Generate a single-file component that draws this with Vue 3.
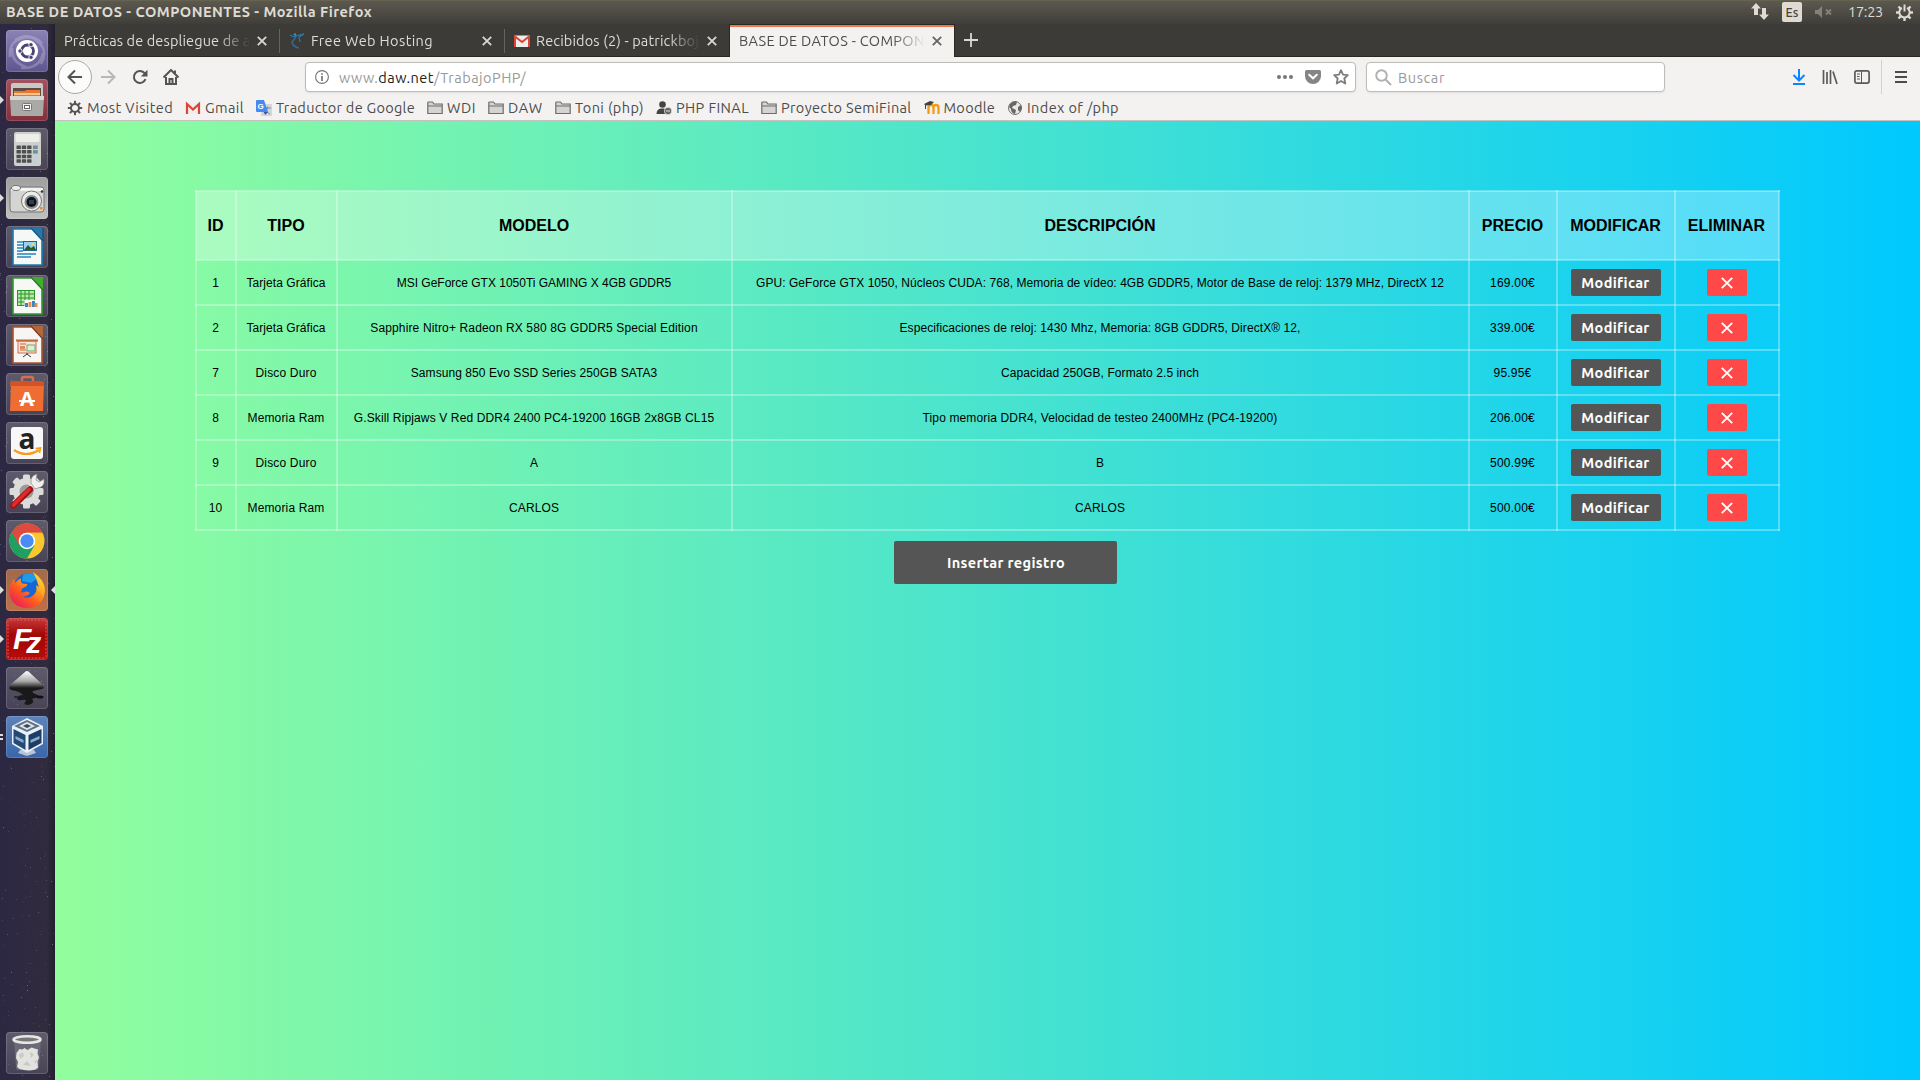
<script setup>
// Spreads an element's letters so the label takes the given width.
const applyFit = (el, { value }) => {
  if (!value) return
  el.style.letterSpacing = '0px'
  const range = document.createRange()
  range.selectNodeContents(el)
  const natural = range.getBoundingClientRect().width
  el.style.letterSpacing = `${(value - natural) / el.textContent.length}px`
}
const vFit = { mounted: applyFit }

const bookmarks = [
  { icon: 'gear', label: 'Most Visited', width: 86 },
  { icon: 'gmail', label: 'Gmail', width: 39 },
  { icon: 'translate', label: 'Traductor de Google', width: 139 },
  { icon: 'folder', label: 'WDI', width: 29 },
  { icon: 'folder', label: 'DAW', width: 35 },
  { icon: 'folder', label: 'Toni (php)', width: 69 },
  { icon: 'user', label: 'PHP FINAL', width: 73 },
  { icon: 'folder', label: 'Proyecto SemiFinal', width: 130.5 },
  { icon: 'moodle', label: 'Moodle', width: 51.5 },
  { icon: 'globe', label: 'Index of /php', width: 92 }
]

const headers = ['ID', 'TIPO', 'MODELO', 'DESCRIPCIÓN', 'PRECIO', 'MODIFICAR', 'ELIMINAR']
const rows = [
  ['1', 'Tarjeta Gráfica', 'MSI GeForce GTX 1050Ti GAMING X 4GB GDDR5', 'GPU: GeForce GTX 1050, Núcleos CUDA: 768, Memoria de vídeo: 4GB GDDR5, Motor de Base de reloj: 1379 MHz, DirectX 12', '169.00€'],
  ['2', 'Tarjeta Gráfica', 'Sapphire Nitro+ Radeon RX 580 8G GDDR5 Special Edition', 'Especificaciones de reloj: 1430 Mhz, Memoria: 8GB GDDR5, DirectX® 12,', '339.00€'],
  ['7', 'Disco Duro', 'Samsung 850 Evo SSD Series 250GB SATA3', 'Capacidad 250GB, Formato 2.5 inch', '95.95€'],
  ['8', 'Memoria Ram', 'G.Skill Ripjaws V Red DDR4 2400 PC4-19200 16GB 2x8GB CL15', 'Tipo memoria DDR4, Velocidad de testeo 2400MHz (PC4-19200)', '206.00€'],
  ['9', 'Disco Duro', 'A', 'B', '500.99€'],
  ['10', 'Memoria Ram', 'CARLOS', 'CARLOS', '500.00€']
]
const cellWidths = [
  [0, 79, 274.5, 688, 45],
  [0, 79, 327.5, 401, 45],
  [0, 61, 246.5, 198, 38],
  [0, 77, 360.5, 355, 45],
  [0, 61, 0, 0, 45],
  [0, 77, 50, 50, 45]
]

// Star specks of the launcher wallpaper.
let seed = 17
const rnd = () => (seed = (seed * 16807) % 2147483647) / 2147483647
const specks = Array.from({ length: 420 }, () => ({
  x: Math.floor(rnd() * 55), y: Math.floor(rnd() * 1056), o: (0.06 + rnd() * rnd() * 0.4).toFixed(2)
}))
const calcKeys = [0, 1, 2, 3].flatMap(r => [0, 1, 2].map(c => ({ x: 10.5 + c * 5.3, y: 17.5 + r * 4.6 })))
const teeth = [0, 45, 90, 135, 180, 225, 270, 315]
</script>

<template>
  <div class="desktop">
    <header class="panel">
      <b v-fit="366" class="panel-title">BASE DE DATOS - COMPONENTES - Mozilla Firefox</b>
      <div class="indicators">
        <svg class="i-net" width="18" height="18" viewBox="0 0 18 18"><path d="M5 0L10 5.5H7V12H3V5.5H0zM13 17l5-5.500h-3V5h-4v6.500H8z" fill="#dfdbd2" /></svg>
        <span class="kbd">Es</span>
        <svg class="i-vol" width="18" height="14" viewBox="0 0 18 14"><path d="M0 5h3l4-4v12L3 9H0z" fill="#85827a" /><path d="M11 4.500l5 5m0-5l-5 5" stroke="#85827a" stroke-width="1.800" /></svg>
        <span v-fit="35" class="clock">17:23</span>
        <svg class="i-power" width="17" height="17" viewBox="0 0 17 17">
          <g fill="#dfdbd2"><rect v-for="t in teeth" :key="t" v-show="t" x="7.300" y="0" width="2.400" height="4" :transform="`rotate(${t} 8.5 8.500)`" /></g>
          <path d="M5.800 3.900a5.200 5.200 0 1 0 5.400 0" fill="none" stroke="#dfdbd2" stroke-width="2" /><path d="M8.500.5v7" stroke="#dfdbd2" stroke-width="2" />
        </svg>
      </div>
    </header>

    <div class="workspace">
      <aside class="launcher">
        <svg class="stars" width="55" height="1056"><rect v-for="(s, i) in specks" :key="i" :x="s.x" :y="s.y" width="1" height="1" fill="#cfc9ee" :opacity="s.o" /></svg>

        <div class="tile t-dash"><svg viewBox="0 0 42 42">
          <g fill="none" stroke="#fff" opacity=".22" stroke-width="2.500"><path d="M4 27Q2 9 22 7Q32 7 36 14" /><path d="M9 10Q26 0 37 18Q40 25 35 34" /><path d="M15 38Q34 39 37 23" /><path d="M6 18Q5 32 20 37" /></g>
          <circle cx="21" cy="21" r="11" fill="#fff" /><circle cx="21.500" cy="21" r="6" fill="none" stroke="#4a4272" stroke-width="2.800" />
          <g fill="#4a4272" stroke="#fff" stroke-width=".9"><circle cx="14" cy="21" r="2.200" /><circle cx="25" cy="14.700" r="2.200" /><circle cx="25" cy="27.300" r="2.200" /></g>
        </svg></div>

        <div class="tile t-files"><svg viewBox="0 0 42 42">
          <rect x="5" y="4" width="32" height="17" rx="2" fill="#c9c8c4" /><rect x="7" y="9" width="28" height="10" fill="#5d4b44" /><path d="M8 12h11l1-1h14v8H8z" fill="#e57732" /><path d="M8 14h26v2H8z" fill="#ffc38a" />
          <path d="M4 17h34l-1 19q0 1-1 1H6q-1 0-1-1z" fill="#aaa9a5" /><path d="M4 17h34v4H4z" fill="#d8d7d3" /><rect x="16.500" y="24.500" width="9" height="7" rx="1" fill="#eee" stroke="#777" /><rect x="18.500" y="26.500" width="5" height="3" fill="#fff" stroke="#666" />
        </svg><i class="pip" /></div>

        <div class="tile"><svg viewBox="0 0 42 42">
          <rect x="8" y="4" width="27" height="34" rx="2" fill="#cfcfcc" /><rect x="9.500" y="6" width="24" height="8" rx="1" fill="#eceeea" />
          <g fill="#4b4f50"><rect v-for="(k, i) in calcKeys" :key="i" :x="k.x" :y="k.y" width="4.400" height="3.500" rx=".5" /></g><rect x="27" y="17.500" width="4.800" height="3.500" fill="#728f9c" /><rect x="27" y="22.100" width="4.800" height="3.500" fill="#728f9c" /><rect x="27" y="26.700" width="4.800" height="8.200" fill="#bdd0dc" />
        </svg></div>

        <div class="tile t-camera"><svg viewBox="0 0 42 42">
          <rect x="4" y="10" width="34" height="25" rx="3" fill="#d4d4d2" stroke="#777" /><rect x="5" y="11" width="32" height="3" fill="#f3f3f2" /><ellipse cx="10" cy="11" rx="4.500" ry="2.500" fill="#eee" stroke="#777" />
          <circle cx="25.500" cy="24" r="10" fill="#ececec" stroke="#777" /><circle cx="25.500" cy="25" r="7" fill="#8a8a88" /><circle cx="25.500" cy="25" r="5" fill="#111" /><rect x="23" y="23" width="5" height="4" fill="#1e3f72" /><circle cx="36" cy="14.500" r="1.300" fill="#333" /><rect x="34" y="30" width="2.500" height="2.500" fill="#f08a1d" />
        </svg><i class="pip" /></div>

        <div class="tile"><svg viewBox="0 0 42 42">
          <path d="M7 3h19l10 11v25H7z" fill="#f6f8f8" stroke="#1c7ab1" stroke-width="1.600" /><path d="M25 2h12v13z" fill="#2b75a7" /><path d="M25 2l12 13V2" fill="none" stroke="#14476a" />
          <g stroke="#2784ba" stroke-width="1.500"><path d="M11 16h6M11 19h6M11 22h6M11 25h6M11 28h19M11 31h14" /></g><rect x="17.500" y="15.500" width="13" height="9" fill="#9ad0ee" stroke="#25648b" /><path d="M18 24l4-5 3 3 3-2 2 4z" fill="#305a27" /><circle cx="27" cy="18" r="1.200" fill="#ffd64d" />
        </svg></div>

        <div class="tile"><svg viewBox="0 0 42 42">
          <path d="M7 3h19l10 11v25H7z" fill="#f6f8f5" stroke="#2d9c28" stroke-width="1.600" /><path d="M25 2h12v13z" fill="#3fae2f" /><path d="M25 2l12 13" stroke="#235e1d" />
          <rect x="11.500" y="15.500" width="17" height="15" fill="#b8e8a8" stroke="#29952a" /><path d="M12 19h16M12 23h16M12 27h16M15 16v14M19 16v14M23 16v14" stroke="#29952a" /><rect x="18.500" y="25" width="12.500" height="7" fill="#fff" /><path d="M20.500 32v-4M27.500 32v-6" stroke="#3187c9" stroke-width="3" /><path d="M24 32v-5M30 32v-4" stroke="#ea8952" stroke-width="3" />
        </svg></div>

        <div class="tile"><svg viewBox="0 0 42 42">
          <path d="M7 3h19l10 11v25H7z" fill="#f8f6f4" stroke="#a9532d" stroke-width="1.600" /><path d="M25 2h12v13z" fill="#b5653a" /><path d="M25 2l12 13" stroke="#583221" />
          <rect x="12" y="17" width="18" height="12" fill="#fae3d5" stroke="#cb7148" /><path d="M10 16.500h22" stroke="#c3683f" stroke-width="2" /><path d="M14 20h6M14 26h6" stroke="#c3683f" /><rect x="14" y="22" width="5" height="3" fill="#db8a64" /><rect x="21" y="21" width="8" height="6" fill="#ddefd6" stroke="#78a86d" /><path d="M21 29v1l-4 3m4-3l4 3" stroke="#333" fill="none" />
        </svg></div>

        <div class="tile"><svg viewBox="0 0 42 42">
          <path d="M16 12V6q0-2 2-2h7q2 0 2 2v6" fill="none" stroke="#d86e50" stroke-width="2.500" /><path d="M5 9h33l-1 29H4z" fill="#ef6c33" /><path d="M4 13h34V9l-3-1H7L4 9z" fill="#d35328" />
          <text x="21" y="32.500" text-anchor="middle" class="g-bag">A</text><path d="M13 28h16" stroke="#fff" stroke-width="2" />
        </svg></div>

        <div class="tile"><svg viewBox="0 0 42 42">
          <rect x="5" y="5" width="32" height="32" rx="3" fill="#f7f7f7" /><text x="21" y="26.500" text-anchor="middle" class="g-amz">a</text><path d="M8 28q12 8 25 0" fill="none" stroke="#f79b20" stroke-width="2.200" /><path d="M29.500 26.500l5-.5-1 5" fill="none" stroke="#f79b20" stroke-width="1.600" />
        </svg></div>

        <div class="tile"><svg viewBox="0 0 42 42">
          <g fill="#dcdcda"><rect v-for="t in teeth" :key="t" x="17" y="3.500" width="7" height="10" rx="1.500" :transform="`rotate(${t} 20.500 20.500)`" /><circle cx="20.500" cy="20.500" r="13.500" /></g><circle cx="20.500" cy="20.500" r="7" fill="#9b9b9e" />
          <path d="M15 27L29 12" stroke="#e9e9e8" stroke-width="5" /><path d="M25 12q-1-7 6-9l-1 6 3 2 5-3q1 8-6 9l-3 1z" fill="#efefee" stroke="#888" stroke-width=".7" /><path d="M7.500 34.500L24 18.500" stroke="#9d1515" stroke-width="6.500" stroke-linecap="round" /><path d="M7.500 34L23 18.500" stroke="#e12b2b" stroke-width="3.500" stroke-linecap="round" />
        </svg></div>

        <div class="tile"><svg viewBox="0 0 42 42">
          <circle cx="21" cy="21" r="17.500" fill="#fbc72f" /><path d="M21 21L5.840 12.250A17.500 17.500 0 0 1 36.160 12.250H21z" fill="#dd4b3e" /><path d="M21 21H21L5.840 12.250A17.500 17.500 0 0 0 21 38.500L28.500 25.500z" fill="#1ea061" /><path d="M21 12.500H36.300A17.500 17.500 0 0 0 5.840 12.250L13.500 25.500z" fill="#dd4b3e" />
          <circle cx="21" cy="21" r="8.300" fill="#fff" /><circle cx="21" cy="21" r="6.700" fill="#4b8cf4" />
        </svg></div>

        <div class="tile t-firefox"><svg viewBox="0 0 42 42">
          <defs><linearGradient id="fx" x1="1" y1="0" x2=".2" y2="1"><stop offset="0" stop-color="#fff04a" /><stop offset=".35" stop-color="#ffb01f" /><stop offset=".65" stop-color="#ff5a1f" /><stop offset="1" stop-color="#e81b5d" /></linearGradient></defs>
          <circle cx="22" cy="18.500" r="14" fill="#1766d6" /><path d="M17 6q9-4 15 3l-7 5-9-2z" fill="#1f9bea" />
          <path d="M27 3q12 8 12 19Q37 39 21 39Q4 38 3.500 22Q4 14 8 10l1 4q3-4 6-4.500-1 3 1 5l5 .5q1 2-5 4.500l-1 4q3 0 5-1 3 0 4 2-3 3-7 3 5 3 10-1 5-4 3-10 2 0 3 2Q31 10 27 3z" fill="url(#fx)" />
        </svg><i class="pip" /><i class="pip-r" /></div>

        <div class="tile t-fz"><svg viewBox="0 0 42 42"><rect x="2" y="2" width="38" height="38" rx="2" fill="none" stroke="#e15a5a" stroke-dasharray="2 1.500" />
          <text x="7" y="31" class="g-fz">F<tspan dx="-5" dy="3.500">z</tspan></text></svg><i class="pip" /></div>

        <div class="tile"><svg viewBox="0 0 42 42">
          <defs><linearGradient id="ink" x2="0" y2="1"><stop offset="0" stop-color="#fff" /><stop offset=".3" stop-color="#a9a9a9" /><stop offset=".5" stop-color="#191919" /></linearGradient></defs>
          <path d="M19 5q2-2 4 0l14 13q2 3-1 4l-9 2q-2 2 5 4 2 2-3 3l-3 1q4 4-4 6-5 0-3-3 3-3-3-2-5 1-5-2 1-3 6-3-4-4-12-5-3-2-1-5z" fill="url(#ink)" /><ellipse cx="34" cy="30" rx="3.500" ry="1.500" fill="#111" /><ellipse cx="10" cy="30" rx="2" ry="1" fill="#222" />
        </svg></div>

        <div class="tile t-vbox"><svg viewBox="0 0 42 42">
          <path d="M14 34h14l2 3-9 3-9-3z" fill="#b7c4d5" /><path d="M21 2l16 8v18l-16 9-15-9V10z" fill="#e9f0f7" /><path d="M21 4l13 6-13 6-13-6z" fill="#64717f" /><path d="M21 6l8 4-8 4-8-4z" fill="#dce5ee" /><path d="M21 8l4 2-4 2-4-2z" fill="#35495f" />
          <path d="M7.500 13l12 6v15l-12-7z" fill="#234a75" /><path d="M35.500 13l-13 6v15l13-7z" fill="#1c3d68" /><path d="M9.500 20l8 4v3l-8-4zM24.500 24l9-4v3l-9 4z" fill="#8eacc9" />
        </svg><i class="bars" /></div>

        <div class="tile t-trash"><svg viewBox="0 0 42 42">
          <path d="M8 8l2 28q0 2 3 2h17q3 0 3-2l2-28z" fill="#777783" opacity=".65" /><path d="M10.500 21l3-4 3 .5 2-1.500 3 2 4-2.500 3 1 3.500 1-.5 4 1.500 4-1.500 4 .5 6-2.500 2q-8 2-16-.5l-2.500-2 1-5-2-4z" fill="#e2e2df" /><path d="M13 22l4-1.500 1 3.500-4 3zM24 20l4 2.500-3 3.500zM17 33l4-4 4 5zM28 29l3-1-1 4z" fill="#c9c9c6" /><ellipse cx="21" cy="7.500" rx="13.500" ry="3.200" fill="#777" stroke="#e6e6e2" stroke-width="2.500" />
        </svg></div>
      </aside>

      <main class="browser">
        <nav class="tabs">
          <div class="tab first"><span class="clip"><span v-fit="195">Prácticas de despliegue de ap</span></span><svg class="close" viewBox="0 0 10 10"><path d="M.8.8l8.400 8.400M9.200.8L.8 9.200" /></svg></div>
          <div class="tab"><svg class="fav" viewBox="0 0 16 16"><path d="M1 2q5 3 6 1l8-2-5 3 1 5" fill="none" stroke="#287bb1" stroke-width="1.200" /><circle cx="6" cy="1.500" r="1.300" fill="#438ebf" /><path d="M7 4l-4 5q1 5 7 6" stroke="#326b91" fill="none" stroke-width="1.500" /></svg><span class="clip"><span v-fit="122">Free Web Hosting</span></span><svg class="close" viewBox="0 0 10 10"><path d="M.8.8l8.400 8.400M9.200.8L.8 9.200" /></svg></div>
          <div class="tab"><svg class="fav" viewBox="0 0 16 16"><path d="M1 2.500h14v11.500H1z" fill="#eee" /><path d="M1 14V3.500L8 9l7-5.500V14" fill="none" stroke="#db4437" stroke-width="2" /></svg><span class="clip"><span v-fit="171">Recibidos (2) - patrickboje</span></span><svg class="close" viewBox="0 0 10 10"><path d="M.8.8l8.400 8.400M9.200.8L.8 9.200" /></svg></div>
          <div class="tab active"><span class="clip"><span v-fit="194">BASE DE DATOS - COMPONE</span></span><svg class="close" viewBox="0 0 10 10"><path d="M.8.8l8.400 8.400M9.200.8L.8 9.200" /></svg></div>
          <svg class="plus" width="14" height="14" viewBox="0 0 14 14"><path d="M7 0v14M0 7h14" stroke="#dad8d4" stroke-width="1.800" /></svg>
        </nav>

        <div class="toolbar">
          <div class="back"><svg width="16" height="16" viewBox="0 0 16 16"><path d="M15 8H2M8 1.500L1.500 8 8 14.500" /></svg></div>
          <svg class="tool dim fwd" viewBox="0 0 16 16"><path d="M1 8h13M8 1.500L14.500 8 8 14.500" /></svg>
          <svg class="tool reload" viewBox="0 0 16 16"><path d="M13.500 10.200A6 6 0 1 1 12.200 3.800L14 5.500" /><path d="M15.500.8v6.700H8.800z" class="solid" /></svg>
          <svg class="tool home" viewBox="0 0 16 16"><path d="M.5 8.500L8 1l7.500 7.500M3 8v7h10V8" /><path d="M12 1.500v3" /><path d="M6.500 15v-5h3v5" /></svg>
          <div class="url">
            <svg class="info" width="14" height="14" viewBox="0 0 14 14"><circle cx="7" cy="7" r="6.400" fill="none" stroke="#737373" stroke-width="1.100" /><path d="M7 3.200v1.600M7 6v5" stroke="#737373" stroke-width="1.700" /></svg>
            <span v-fit="187" class="address">www.<b>daw.net</b>/TrabajoPHP/</span>
            <svg class="dots" width="16" height="4" viewBox="0 0 16 4"><circle cx="2" cy="2" r="2" /><circle cx="8" cy="2" r="2" /><circle cx="14" cy="2" r="2" /></svg>
            <svg class="pocket" width="16" height="14" viewBox="0 0 16 14"><path d="M1.500 0h13Q16 0 16 1.500V6a8 8 0 0 1-16 0V1.500Q0 0 1.500 0z" fill="#858585" /><path d="M4.200 4.800L8 8.300l3.800-3.500" fill="none" stroke="#fff" stroke-width="2" stroke-linecap="round" /></svg>
            <svg class="star" width="16" height="16" viewBox="0 0 16 16"><path d="M8 1.200l2 4.500 4.800.5-3.500 3.300 1 5L8 12l-4.300 2.500 1-5L1.200 6.200 6 5.700z" fill="none" stroke="#7c7c7c" stroke-width="1.800" stroke-linejoin="round" /></svg>
          </div>
          <div class="search"><svg width="17" height="17" viewBox="0 0 17 17"><circle cx="6.500" cy="6.500" r="5.300" fill="none" stroke="#b0b0b0" stroke-width="1.900" /><path d="M10.500 10.500l5.500 5.500" stroke="#b0b0b0" stroke-width="2" /></svg><span v-fit="47">Buscar</span></div>
          <div class="actions">
            <svg width="14" height="16" viewBox="0 0 14 16"><path d="M7 0v11M1.500 6L7 11.500 12.500 6M1 15h12" fill="none" stroke="#0a84ff" stroke-width="2" /></svg>
            <svg width="16" height="16" viewBox="0 0 16 16"><path d="M1.500 1v14M5 3v12M8.500 1v14M11 2.500l4 12.500" fill="none" stroke="#5b5b5b" stroke-width="1.700" /></svg>
            <svg width="16" height="14" viewBox="0 0 16 14"><rect x=".9" y=".9" width="14.200" height="12.200" rx="2" fill="none" stroke="#5b5b5b" stroke-width="1.700" /><path d="M7.500 1v12M3 4h3M3 6.500h2.500M3 9h3" stroke="#5b5b5b" stroke-width="1" /></svg>
          </div>
          <svg class="menu" width="12" height="12" viewBox="0 0 12 12"><path d="M0 1h12M0 6h12M0 11h12" stroke="#4c4c4c" stroke-width="1.800" /></svg>
        </div>

        <div class="bookmarks">
          <div v-for="(b, i) in bookmarks" :key="i" class="bm">
            <svg width="16" height="16" viewBox="0 0 16 16">
              <template v-if="b.icon === 'gear'"><g fill="#555"><rect v-for="t in teeth" :key="t" x="7" y=".8" width="2" height="4" :transform="`rotate(${t} 8 8)`" /></g><circle cx="8" cy="8" r="4" fill="none" stroke="#555" stroke-width="2" /></template>
              <template v-else-if="b.icon === 'gmail'"><path d="M1 3h14v11H1z" fill="#f1eded" /><path d="M2 14V4l6 5.500L14 4v10" fill="none" stroke="#d94536" stroke-width="2.200" /></template>
              <template v-else-if="b.icon === 'translate'"><rect x="5" y="4" width="11" height="12" fill="#d4d6da" /><path d="M8 8h7M11.500 6.500V8q-1 4-4 5M9 9q2 4 5 5" fill="none" stroke="#7c8b9b" /><path d="M0 1q0-1 1-1h7l4 12H1q-1 0-1-1z" fill="#4889ef" /><path d="M8 12h4l-3 3z" fill="#2b50a5" /><text x="1.500" y="9" class="g-tr">G</text></template>
              <path v-else-if="b.icon === 'folder'" d="M.8 13.500v-11Q.8 2 1.500 2h4l1.500 2h8.200v9.500zM1 6h14" fill="#d5d4d2" stroke="#6d6d6d" stroke-width="1.200" />
              <template v-else-if="b.icon === 'user'"><circle cx="6.500" cy="4.500" r="3.300" fill="#444" /><path d="M.5 14q0-5 4.500-5.500h3l2 1v4.500z" fill="#444" /><circle cx="12" cy="11" r="3.700" fill="#666" stroke="#eee" stroke-width=".7" /><path d="M10 11h4" stroke="#ddd" /></template>
              <template v-else-if="b.icon === 'moodle'"><path d="M4.500 14V7.500Q4.500 5 7 5t2.500 2.500V14M9.500 14V7.500Q9.500 5 12 5t2.500 2.500V14" fill="none" stroke="#f49a18" stroke-width="2.300" /><path d="M0 4l6-3 4 1-3 3-5 .5V9H1V5z" fill="#444" /></template>
              <template v-else><circle cx="8" cy="8" r="6.500" fill="#e8e8e8" stroke="#666" stroke-width=".9" /><path d="M3 4q5-4 7-2L9 5 6 6 5 8l4 2-1 4q-4-1-4-5L2 7zM11 7l3-2 1 3-2 4-2-2z" fill="#666" /></template>
            </svg>
            <span v-fit="b.width">{{ b.label }}</span>
          </div>
        </div>

        <section class="page">
          <table>
            <colgroup><col class="c-id"><col class="c-type"><col class="c-model"><col class="c-desc"><col class="c-price"><col class="c-edit"><col class="c-del"></colgroup>
            <thead><tr><th v-for="h in headers" :key="h">{{ h }}</th></tr></thead>
            <tbody>
              <tr v-for="(r, n) in rows" :key="r[0]">
                <td v-for="(c, i) in r" :key="i"><span v-fit="cellWidths[n][i]">{{ c }}</span></td>
                <td><button class="edit"><span v-fit="68">Modificar</span></button></td>
                <td><button class="del"><svg width="12" height="12" viewBox="0 0 12 12"><path d="M.8.8l10.400 10.400M11.200.8L.8 11.200" /></svg></button></td>
              </tr>
            </tbody>
          </table>
          <button class="insert"><span v-fit="118">Insertar registro</span></button>
        </section>
      </main>
    </div>
  </div>
</template>

<style>
body { margin: 0; overflow: hidden; }
</style>

<style scoped>
.desktop { width: 1920px; height: 1080px; display: flex; flex-direction: column; overflow: hidden; font-family: Ubuntu, "Noto Sans", sans-serif; font-size: 14.500px; }
.desktop * { box-sizing: border-box; }
svg { display: block; flex: none; }
span, b { white-space: nowrap; }
.panel { height: 24px; flex: none; display: flex; justify-content: space-between; align-items: center; background: linear-gradient(#5d5a50, #3f3e39); color: #dfdbd2; box-shadow: inset 0 1px #65624f; padding: 0 7px 0 6px; }
.panel-title { font-size: 14.500px; line-height: 22px; padding-bottom: 1px; }
.indicators { display: flex; align-items: center; }
.i-net { margin-right: 13px; }
.kbd { width: 20px; height: 20px; border-radius: 2px; background: #dfdbd2; color: #45433d; font-size: 12.500px; font-weight: 500; line-height: 20px; text-align: center; margin-right: 13px; }
.i-vol { margin-right: 15px; }
.clock { margin-right: 13px; line-height: 22px; padding-bottom: 1px; }
.workspace { flex: 1; display: flex; min-height: 0; }
.launcher { width: 55px; flex: none; position: relative; background: linear-gradient(90deg, #2c2843, #302b3d 85%, #241f30); padding: 6px 0 6px 6px; display: flex; flex-direction: column; gap: 7px; }
.stars { position: absolute; left: 0; top: 0; }
.tile { width: 42px; height: 42px; flex: none; position: relative; border-radius: 4px; background: linear-gradient(rgba(255,255,255,.23), rgba(255,255,255,.12)); box-shadow: inset 0 0 0 1px rgba(255,255,255,.15); }
.tile svg { width: 42px; height: 42px; }
.t-dash { background: linear-gradient(#8b82b5, #5e5690); }
.t-files { background: linear-gradient(#a35261, #842f3c); }
.t-camera { background: linear-gradient(#9e9e9e, #c0c0bf); }
.t-firefox { background: linear-gradient(#a06a4b, #bd7047); }
.t-fz { background: linear-gradient(#c63a3a, #a30606 40%, #b40c0c); }
.t-vbox { background: linear-gradient(#5d83bb, #3a66aa); }
.t-trash { margin-top: auto; }
.pip, .pip-r { position: absolute; top: 17px; border: 4px solid transparent; }
.pip { left: -6px; border-left-color: #ddd; border-right: 0; }
.pip-r { right: -7px; border-right-color: #ddd; border-left: 0; }
.bars { position: absolute; left: -6px; top: 18px; width: 3px; height: 6px; border: solid #ddd; border-width: 2px 0; }
.g-bag { font: bold 20px "Noto Sans", sans-serif; fill: #fff; }
.g-amz { font: bold 28px "Open Sans", sans-serif; fill: #222; }
.g-fz { font: italic bold 30px "Liberation Sans", sans-serif; fill: #fff; }
.g-tr { font: bold 8px "Liberation Sans", sans-serif; fill: #fff; }
.browser { flex: 1; display: flex; flex-direction: column; min-width: 0; background: #f4f2f1; }
.tabs { height: 33px; flex: none; display: flex; background: #3c3b37; border-bottom: 1px solid #292825; color: #dfdcd8; }
.tab { width: 225px; display: flex; align-items: center; padding: 1px 12px 0 9px; position: relative; }
.tab.first { width: 224px; }
.tab:nth-child(1)::after, .tab:nth-child(2)::after { content: ""; position: absolute; right: -1px; top: 5px; width: 1px; height: 24px; background: #66645f; }
.clip { flex: 1; overflow: hidden; margin-right: 7px; line-height: 22px; -webkit-mask-image: linear-gradient(90deg, #000 calc(100% - 32px), transparent); }
.fav { width: 16px; height: 16px; margin: 0 6px 0 1px; }
.close { width: 10px; height: 10px; fill: none; stroke: #dad8d4; stroke-width: 1.800; }
.tab.active { width: 226px; height: 33px; padding-top: 0; background: #f4f2f1; color: #4c4c4c; border: 1px solid #292825; border-bottom: 0; box-shadow: inset 0 2px #f0774b; }
.active .close { stroke: #66645f; }
.plus { margin: 9px 0 0 9px; }
.toolbar { height: 38px; margin-top: 1px; flex: none; display: flex; align-items: center; padding: 0 13px 0 3px; fill: none; stroke: #545454; stroke-width: 2; }
.toolbar span { stroke: none; }
.back { width: 34px; height: 34px; border: 1px solid #aaa9a7; border-radius: 50%; background: #fbfbfa; display: grid; place-items: center; }
.tool { width: 16px; height: 16px; }
.dim { stroke: #b8b7b5; }
.fwd { margin-left: 8px; }
.reload { margin-left: 16px; }
.reload .solid { fill: #545454; stroke: none; }
.home { margin-left: 15px; }
.url, .search { height: 30px; background: #fff; border: 1px solid #bebcb9; border-radius: 4px; display: flex; align-items: center; box-shadow: 0 1px 2px rgba(0,0,0,.08); }
.url { width: 1051px; margin-left: 126px; padding: 0 6px 0 9px; stroke: none; }
.address { margin-left: 10px; color: #999; line-height: 26px; padding-top: 1px; }
.address b { font-weight: 400; color: #222; }
.dots { margin-left: auto; fill: #777; }
.pocket { margin: 0 12px; }
.search { width: 299px; margin-left: 10px; padding-left: 8px; color: #999; }
.search span { margin-left: 6px; line-height: 26px; padding-top: 1px; }
.actions { display: flex; align-items: center; gap: 16px; margin-left: auto; padding-right: 11px; border-right: 1px solid #d3d1cf; height: 34px; }
.menu { margin-left: 13px; }
.bookmarks { height: 25px; flex: none; display: flex; align-items: center; gap: 12px; padding: 0 0 0 12px; color: #4c4c4c; border-bottom: 1px solid #c5c1be; }
.bm { display: flex; align-items: center; gap: 4px; }
.bm span { line-height: 22px; }
.page { flex: 1; background: linear-gradient(to right, #92fe9d, #00c9ff); padding-top: 69px; }
table { width: 1585px; margin: 0 auto; border-collapse: collapse; table-layout: fixed; font: 12px "Liberation Sans", Arial, sans-serif; color: #000; text-align: center; }
.c-id { width: 40px; } .c-type { width: 101px; } .c-model { width: 395px; } .c-desc { width: 737px; } .c-price { width: 88px; } .c-edit { width: 118px; } .c-del { width: 104px; }
th, td { border: 2px solid rgba(255,255,255,.3); padding: 0 1px 0 0; }
th { height: 69px; font-size: 16px; background: rgba(255,255,255,.3); }
td { height: 45px; }
button { display: block; margin: 0 auto; padding: 0; border: 0; border-radius: 2px; color: #fff; background: #555; font: bold 14.500px Ubuntu, "Noto Sans", sans-serif; }
.edit { width: 90px; height: 27px; }
.del { width: 40px; height: 27px; background: #ff4848; }
.del svg { margin: 0 auto; stroke: #fff; stroke-width: 1.900; fill: none; }
.insert { width: 223px; height: 43px; margin: 10px 0 0 839px; padding-left: 1px; }
</style>
